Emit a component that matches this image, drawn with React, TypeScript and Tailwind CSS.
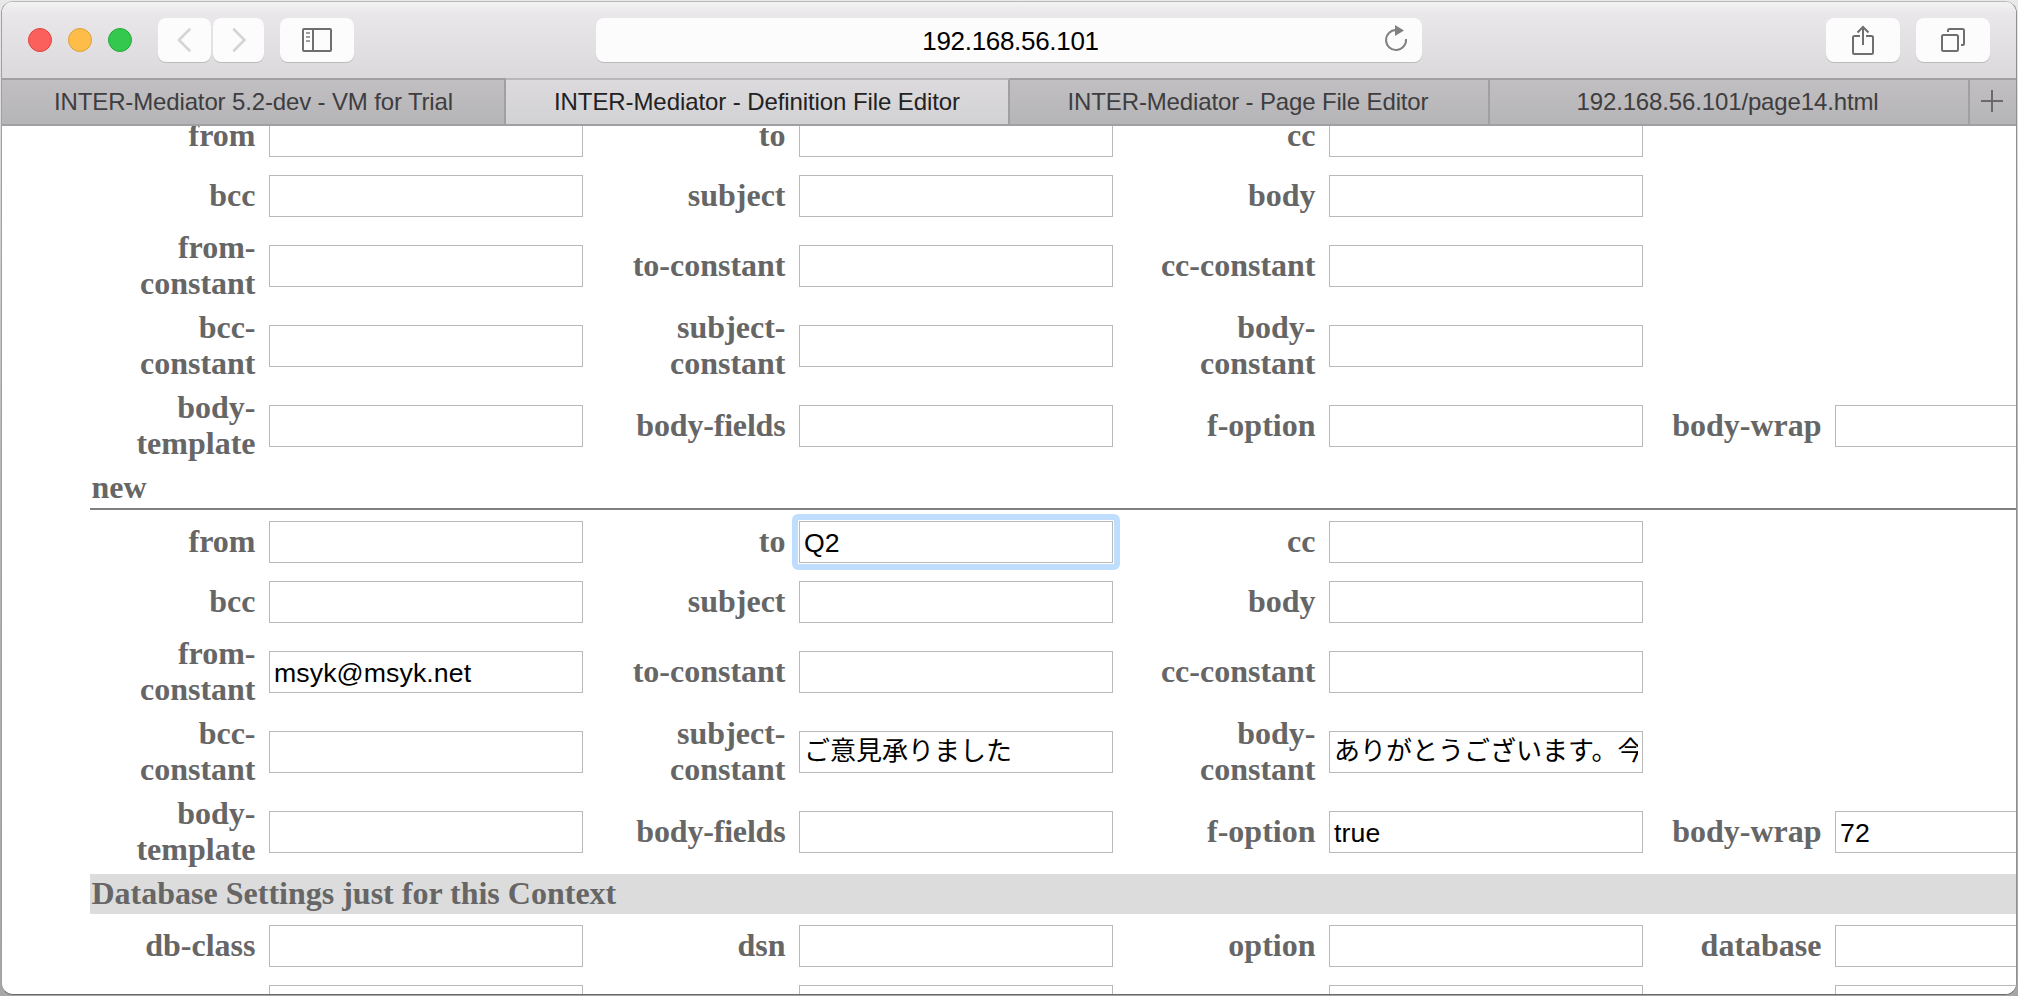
import React from "react";

type Cell = { label: string; value?: string; focused?: boolean; cjk?: boolean };

const mailRows = (v: Record<string, Partial<Cell>>): Cell[][] =>
  [
    ["from", "to", "cc"],
    ["bcc", "subject", "body"],
    ["from-constant", "to-constant", "cc-constant"],
    ["bcc-constant", "subject-constant", "body-constant"],
    ["body-template", "body-fields", "f-option", "body-wrap"],
  ].map((row) => row.map((label) => ({ label, ...(v[label] ?? {}) })));

const emptyRows = mailRows({});
const newRows = mailRows({
  to: { value: "Q2", focused: true },
  "from-constant": { value: "msyk@msyk.net" },
  "subject-constant": { value: "ご意見承りました", cjk: true },
  "body-constant": { value: "ありがとうございます。今後とも", cjk: true },
  "f-option": { value: "true" },
  "body-wrap": { value: "72" },
});

function Field({ value = "", focused, cjk }: Cell) {
  return (
    <div className="relative h-[42px] w-[314px]">
      {focused && (
        <div className="pointer-events-none absolute -inset-[7px] rounded-[6px] border-[6px] border-[#bfdefd]" />
      )}
      <input
        defaultValue={value}
        className={
          "block h-[42px] w-[314px] rounded-none border border-[#b9b9b9] bg-white px-1 text-black outline-none " +
          (cjk
            ? "pb-[7px] font-['Noto_Sans_CJK_JP',sans-serif] text-[26px]"
            : "pt-[2px] font-['Liberation_Sans',Arial,sans-serif] text-[26.67px] tracking-[0.1px]")
        }
      />
    </div>
  );
}

function Row({ cells }: { cells: Cell[] }) {
  const tall = cells.some((c) => ["from-constant", "bcc-constant", "body-template"].includes(c.label));
  return (
    <div
      className={
        "grid w-[2060px] shrink-0 grid-cols-[166px_327px_203px_327px_203px_327px_179px_327px] items-center " +
        (tall ? "h-20" : "h-[60px]")
      }
    >
      {cells.map((c, i) => {
        const wraps = i === 0 || c.label === "subject-constant" || c.label === "body-constant";
        const parts = wraps && tall ? c.label.split("-") : [c.label];
        return (
          <React.Fragment key={i}>
            <div
              className={
                "pr-[0.5px] pb-[2px] text-right text-[32px] leading-9 font-bold whitespace-nowrap " +
                (c.label === "body-fields" ? "tracking-[-0.18px]" : "")
              }
            >
              {parts.length === 2 ? (
                <>
                  {parts[0]}-<br />
                  {parts[1]}
                </>
              ) : (
                c.label
              )}
            </div>
            <div className="pl-[13px]">
              <Field {...c} />
            </div>
          </React.Fragment>
        );
      })}
    </div>
  );
}

function Tab({ title, className }: { title: string; className: string }) {
  return (
    <div
      className={
        "flex shrink-0 items-center justify-center border-t-2 border-r-2 border-b-2 border-[#a09fa1] text-[24px] whitespace-nowrap " +
        className
      }
    >
      {title}
    </div>
  );
}

const toolButton =
  "flex h-11 shrink-0 items-center justify-center rounded-[8px] bg-[#fcfcfc] shadow-[0_1px_0_#bcbcbc]";
const idleTab = "bg-linear-to-b from-[#c1bfc1] to-[#b5b4b6] text-[#3e3d3f] tracking-[-0.14px]";

export default function App() {
  return (
    <div className="h-[996px] w-[2018px] overflow-hidden bg-linear-to-b from-[#e9e9e9] via-[#b4b4b4] to-[#a6a6a6] px-px pt-px pb-px">
      <div className="flex h-[994px] w-[2016px] flex-col overflow-hidden rounded-[12px] border border-t-[#b9b9b9] border-r-[#8f8f8f] border-b-[#6a6a6a] border-l-[#a0a0a0] bg-white">
        <div className="flex h-[76px] shrink-0 items-start bg-linear-to-b from-[#f4f3f4] via-[#e9e7e9] via-15% to-[#dbd9dc] pt-4 pl-[26px]">
          <div className="mt-[10px] flex gap-4">
            <div className="size-6 rounded-full border border-[#e0443f] bg-[#fc605c]" />
            <div className="size-6 rounded-full border border-[#dea03a] bg-[#fdbd48]" />
            <div className="size-6 rounded-full border border-[#22ac39] bg-[#34c84f]" />
          </div>
          <div className={toolButton + " ml-[26px] w-[53px]"}>
            <svg width="16" height="26" viewBox="0 0 16 26" fill="none" stroke="#d4d4d4" strokeWidth="2.6" strokeLinecap="round">
              <path d="M12.500 2.500 2 13l10.500 10.500" />
            </svg>
          </div>
          <div className={toolButton + " ml-[2px] w-[51px]"}>
            <svg width="16" height="26" viewBox="0 0 16 26" fill="none" stroke="#d4d4d4" strokeWidth="2.6" strokeLinecap="round">
              <path d="M3 2.500 13.500 13 3 23.500" />
            </svg>
          </div>
          <div className={toolButton + " ml-4 w-[74px]"}>
            <svg width="30" height="24" viewBox="0 0 30 24" fill="none" stroke="#6f6f6f" strokeWidth="2">
              <rect x="1" y="1" width="28" height="22" rx="1" />
              <path d="M11 1v22" />
              <path d="M4 5h4M4 9h4M4 13h4" stroke="#a0a0a0" />
            </svg>
          </div>
          <div className={toolButton + " relative ml-[242px] w-[826px] text-[26px] tracking-[-0.3px] text-black font-['Liberation_Sans',Arial,sans-serif]"}>
            <span className="pt-[3px] pl-[3px]">192.168.56.101</span>
            <svg className="absolute top-[6px] right-[14px]" width="24" height="28" viewBox="0 0 24 28" fill="none" stroke="#808080" strokeWidth="2">
              <path d="M22 15A10 10 0 1 1 12 6" />
              <path d="M11 1v11l9-5.500z" fill="#808080" stroke="none" />
            </svg>
          </div>
          <div className={toolButton + " ml-[404px] w-[74px]"}>
            <svg width="24" height="32" viewBox="0 0 24 32" fill="none" stroke="#6f6f6f" strokeWidth="2">
              <path d="M9 12H3.500Q2 12 2 13.500V28.500Q2 30 3.500 30H20.500Q22 30 22 28.500V13.500Q22 12 20.500 12H15" />
              <path d="M12 21V3M6.500 8.500 12 3l5.500 5.500" />
            </svg>
          </div>
          <div className={toolButton + " ml-4 w-[74px]"}>
            <svg width="24" height="24" viewBox="0 0 24 24" fill="none" stroke="#6f6f6f" strokeWidth="2">
              <rect x="1" y="7" width="16" height="16" rx="1.500" />
              <path d="M7 4V2.500Q7 1 8.500 1H21.500Q23 1 23 2.500V15.500Q23 17 21.500 17H20" />
            </svg>
          </div>
        </div>
        <div className="flex h-12 shrink-0 font-['Liberation_Sans',Arial,sans-serif]">
          <Tab title="INTER-Mediator 5.2-dev - VM for Trial" className={"w-[504px] pl-px " + idleTab} />
          <Tab
            title="INTER-Mediator - Definition File Editor"
            className="w-[504px] border-t-[#b9b8ba] bg-linear-to-b from-[#dcdadc] to-[#d2d1d3] tracking-[-0.09px] text-[#222222]"
          />
          <Tab title="INTER-Mediator - Page File Editor" className={"w-[480px] pr-[2px] " + idleTab} />
          <Tab title="192.168.56.101/page14.html" className={"w-[480px] pr-[3px] " + idleTab} />
          <div className="flex grow items-center justify-center border-y-2 border-[#a09fa1] bg-linear-to-b from-[#c1bfc1] to-[#b5b4b6] pr-[2px] pb-[2px]">
            <svg width="22" height="22" viewBox="0 0 22 22" stroke="#6a696b" strokeWidth="2">
              <path d="M11 0v22M0 11h22" />
            </svg>
          </div>
        </div>
        <div className="min-h-0 grow overflow-hidden font-['Liberation_Serif','Times_New_Roman',serif] text-[#666666]">
          <div className="-mt-5 flex flex-col pl-[88px]">
            {emptyRows.map((cells, i) => (
              <Row key={i} cells={cells} />
            ))}
            <div className="mt-[2px] mb-[2px] h-[42px] w-[2060px] border-b-2 border-[#808080] pt-[1px] pl-[1.5px] text-[32px] leading-9 font-bold">
              new
            </div>
            {newRows.map((cells, i) => (
              <Row key={i} cells={cells} />
            ))}
            <div className="my-[2px] h-10 w-[2060px] bg-[#dcdcdc] pt-[1px] pl-[1.5px] text-[32px] leading-9 font-bold">
              Database Settings just for this Context
            </div>
            <Row cells={["db-class", "dsn", "option", "database"].map((label) => ({ label }))} />
            <Row cells={["", "", "", ""].map((label) => ({ label }))} />
          </div>
        </div>
      </div>
    </div>
  );
}
